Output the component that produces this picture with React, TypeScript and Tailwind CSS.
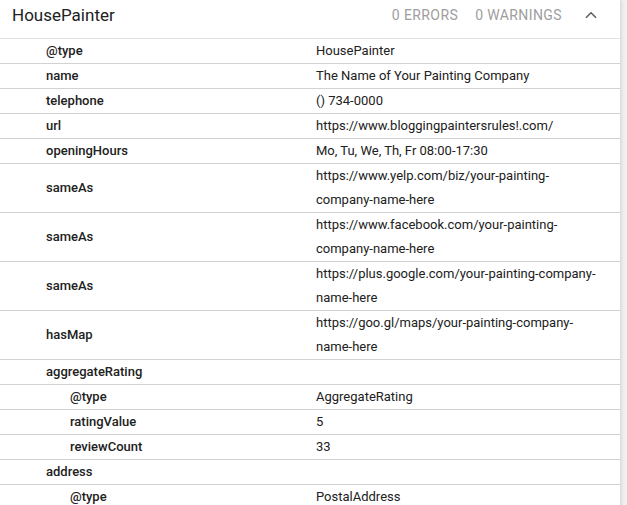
import { ChevronUp } from 'lucide-react';

type Row = { k: string; v?: string; nested?: boolean };

const rows: Row[] = [
  { k: '@type', v: 'HousePainter' },
  { k: 'name', v: 'The Name of Your Painting Company' },
  { k: 'telephone', v: '() 734-0000' },
  { k: 'url', v: 'https://www.bloggingpaintersrules!.com/' },
  { k: 'openingHours', v: 'Mo, Tu, We, Th, Fr 08:00-17:30' },
  { k: 'sameAs', v: 'https://www.yelp.com/biz/your-painting-company-name-here' },
  { k: 'sameAs', v: 'https://www.facebook.com/your-painting-company-name-here' },
  { k: 'sameAs', v: 'https://plus.google.com/your-painting-company-name-here' },
  { k: 'hasMap', v: 'https://goo.gl/maps/your-painting-company-name-here' },
  { k: 'aggregateRating' },
  { k: '@type', v: 'AggregateRating', nested: true },
  { k: 'ratingValue', v: '5', nested: true },
  { k: 'reviewCount', v: '33', nested: true },
  { k: 'address' },
  { k: '@type', v: 'PostalAddress', nested: true },
];

export default function App() {
  return (
    <div className="w-[627px] h-[505px] overflow-hidden bg-[#f1f1f1] font-['Roboto',sans-serif]">
      <div className="w-[620px] min-h-full bg-white shadow-[1px_0_4px_rgba(0,0,0,0.14)]">
        {/* Header */}
        <div className="h-[39px] flex items-start pt-[4px] pl-[12px] border-b border-[#e3e3e3]">
          <div className="text-[17px] leading-[22px] text-[#212121]">HousePainter</div>
          <div className="ml-auto flex items-center h-[22px] text-[14px] tracking-[0.4px] text-[#9e9e9e]">
            <span>0 ERRORS</span>
            <span className="ml-[17px]">0 WARNINGS</span>
            <ChevronUp className="ml-[20px] mr-[20px] w-[18px] h-[18px] text-[#616161]" strokeWidth={2.2} />
          </div>
        </div>

        {/* Properties */}
        {rows.map((r, i) => (
          <div key={i} className="grid grid-cols-[316px_1fr] border-b border-[#d2d2d2] text-[13px] leading-[24px] text-[#212121]">
            <div className={`flex items-center font-medium ${r.nested ? 'pl-[70px]' : 'pl-[46px]'}`}>{r.k}</div>
            <div className="pr-[22px] break-words">{r.v ?? ''}</div>
          </div>
        ))}
      </div>
    </div>
  );
}
